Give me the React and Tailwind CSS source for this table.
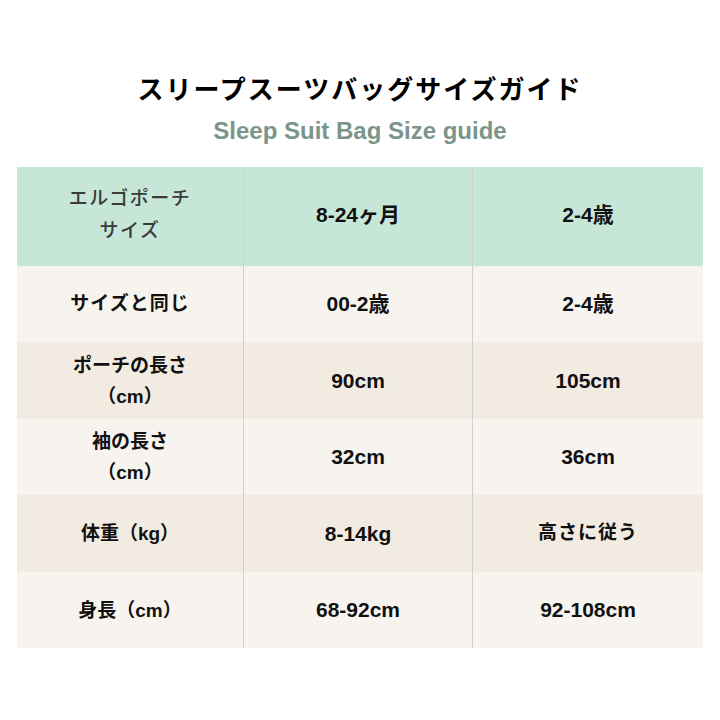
import React from 'react'

const rows = [
  { label: ['ポーチの長さ', '（cm）'], a: '90cm', b: '105cm', tone: 'tan', h: 'h-[77px]' },
  { label: ['袖の長さ', '（cm）'], a: '32cm', b: '36cm', tone: 'light', h: 'h-[76px]' },
  { label: ['体重（kg）'], a: '8-14kg', b: '高さに従う', tone: 'tan', h: 'h-[77px]' },
  { label: ['身長（cm）'], a: '68-92cm', b: '92-108cm', tone: 'light', h: 'h-[76px]' },
]

function Cell({ children, last, className = '' }) {
  return (
    <div
      className={`flex flex-col items-center justify-center text-center ${last ? '' : 'border-r border-[#cfcfcf]'} ${className}`}
    >
      {children}
    </div>
  )
}

export default function App() {
  return (
    <div
      className="w-[720px] h-[720px] bg-white flex flex-col items-center"
      style={{ fontFamily: '"Liberation Sans", "Noto Sans CJK JP", sans-serif' }}
    >
      <h1 className="mt-[74px] text-[26px] leading-[32px] font-bold text-black tracking-[2px]">
        スリープスーツバッグサイズガイド
      </h1>
      <p className="mt-[11px] text-[24px] leading-[28px] font-bold text-[#7b958a]">
        Sleep Suit Bag Size guide
      </p>

      <div className="mt-[22px] w-[686px] flex flex-col text-[21px] font-bold text-[#111]">
        {/* header */}
        <div className="grid grid-cols-[227px_229px_230px] h-[99px] bg-[#c6e6d8]">
          <Cell className="font-medium text-[19px] text-[#3a3a3a] tracking-[1.5px] leading-[32px] pb-[4px]">
            <span>エルゴポーチ</span>
            <span>サイズ</span>
          </Cell>
          <Cell className="pb-[4px]">8-24ヶ月</Cell>
          <Cell last className="pb-[4px]">2-4歳</Cell>
        </div>

        <div className="grid grid-cols-[227px_229px_230px] h-[76px] bg-[#f7f4ef]">
          <Cell className="text-[19px] tracking-[1px]">サイズと同じ</Cell>
          <Cell>00-2歳</Cell>
          <Cell last>2-4歳</Cell>
        </div>

        {rows.map((r, i) => (
          <div
            key={i}
            className={`grid grid-cols-[227px_229px_230px] ${r.h} ${r.tone === 'tan' ? 'bg-[#f2ebe2]' : 'bg-[#f7f4ef]'}`}
          >
            <Cell className="text-[19px] leading-[31px]">
              {r.label.map((l, j) => (
                <span key={j}>{l}</span>
              ))}
            </Cell>
            <Cell>{r.a}</Cell>
            <Cell last className={r.b === '高さに従う' ? 'text-[19px] tracking-[1px]' : ''}>
              {r.b}
            </Cell>
          </div>
        ))}
      </div>
    </div>
  )
}
